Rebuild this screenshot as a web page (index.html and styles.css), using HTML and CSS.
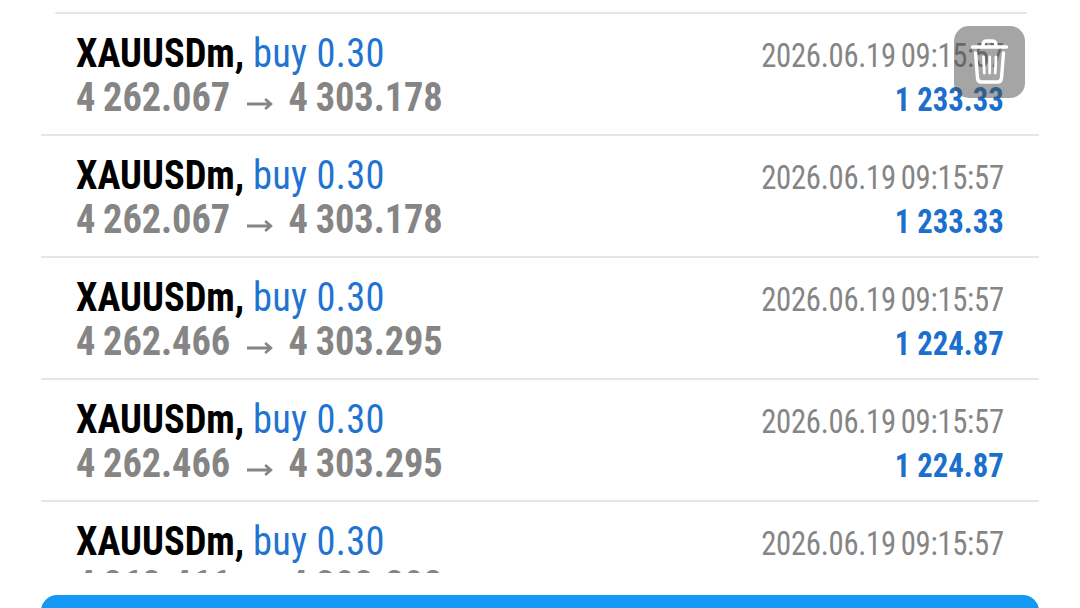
FILE: index.html
```html
<!DOCTYPE html>
<html lang="en">
<head>
  <meta charset="UTF-8">
  <meta name="viewport" content="width=device-width, initial-scale=1.0">
  <title>Trade History</title>
  <link rel="stylesheet" href="styles.css">
</head>
<body>
  <div class="history">
    <div class="top-line"></div>
    <div class="deal">
      <div class="deal-info">
        <div class="deal-title"><span class="symbol">XAUUSDm,</span> <span class="side">buy 0.30</span></div>
        <div class="prices"><span>4 262.067</span><svg class="arrow" viewBox="0 0 27 16"><path d="M0 8h25M19 3l6 5-6 5"/></svg><span>4 303.178</span></div>
      </div>
      <div class="deal-result">
        <div class="time">2026.06.19 09:15:57</div>
        <div class="profit">1 233.33</div>
      </div>
    </div>
    <div class="deal">
      <div class="deal-info">
        <div class="deal-title"><span class="symbol">XAUUSDm,</span> <span class="side">buy 0.30</span></div>
        <div class="prices"><span>4 262.067</span><svg class="arrow" viewBox="0 0 27 16"><path d="M0 8h25M19 3l6 5-6 5"/></svg><span>4 303.178</span></div>
      </div>
      <div class="deal-result">
        <div class="time">2026.06.19 09:15:57</div>
        <div class="profit">1 233.33</div>
      </div>
    </div>
    <div class="deal">
      <div class="deal-info">
        <div class="deal-title"><span class="symbol">XAUUSDm,</span> <span class="side">buy 0.30</span></div>
        <div class="prices"><span>4 262.466</span><svg class="arrow" viewBox="0 0 27 16"><path d="M0 8h25M19 3l6 5-6 5"/></svg><span>4 303.295</span></div>
      </div>
      <div class="deal-result">
        <div class="time">2026.06.19 09:15:57</div>
        <div class="profit">1 224.87</div>
      </div>
    </div>
    <div class="deal">
      <div class="deal-info">
        <div class="deal-title"><span class="symbol">XAUUSDm,</span> <span class="side">buy 0.30</span></div>
        <div class="prices"><span>4 262.466</span><svg class="arrow" viewBox="0 0 27 16"><path d="M0 8h25M19 3l6 5-6 5"/></svg><span>4 303.295</span></div>
      </div>
      <div class="deal-result">
        <div class="time">2026.06.19 09:15:57</div>
        <div class="profit">1 224.87</div>
      </div>
    </div>
    <div class="deal">
      <div class="deal-info">
        <div class="deal-title"><span class="symbol">XAUUSDm,</span> <span class="side">buy 0.30</span></div>
        <div class="prices"><span>4 262.466</span><svg class="arrow" viewBox="0 0 27 16"><path d="M0 8h25M19 3l6 5-6 5"/></svg><span>4 303.202</span></div>
      </div>
      <div class="deal-result">
        <div class="time">2026.06.19 09:15:57</div>
      </div>
    </div>
  </div>
  <div class="bottom-bar"></div>

  <button class="delete" aria-label="Delete">
    <svg viewBox="0 0 71 72">
      <path d="M18.5 21h34M29 20v-1q0-4 4-4h5q4 0 4 4v1M21.5 27l2 25q.3 4 4 4h16q3.700 0 4-4l2-25"/>
      <path class="ribs" d="M29.500 31l.8 16M35.700 31v16M42 31l-.8 16"/>
    </svg>
  </button>
</body>
</html>
```

FILE: styles.css
```css
* {
  box-sizing: border-box;
}

body {
  margin: 0;
  padding: 12px 41px 0;
  height: 608px;
  overflow: hidden;
  background: #fff;
  font-family: "Roboto Condensed", Roboto, sans-serif;
  font-stretch: 75%;
}

.history {
  height: 561px;
  overflow: hidden;
}

.top-line {
  height: 2px;
  margin: 0 12px 0 14px;
  background: #e6e6e6;
  border-radius: 2px;
}

.deal {
  display: flex;
  justify-content: space-between;
  height: 122px;
  padding: 18px 35px 0 35px;
  border-bottom: 2px solid #e6e6e6;
}

/* narrower digits and letters than the regular condensed cut */
.deal-title,
.prices {
  font-size: 40px;
  white-space: nowrap;
  transform: scaleX(0.96);
  transform-origin: left;
}

.deal-title {
  line-height: 44px;
}

.symbol {
  font-weight: 700;
  color: #000;
}

.side {
  letter-spacing: 0.3px;
  color: #1f74d2;
}

.prices {
  display: flex;
  align-items: center;
  line-height: 43px;
  font-weight: 700;
  letter-spacing: -0.1px;
  word-spacing: -1px;
  color: #858585;
}

.arrow {
  width: 27px;
  height: 16px;
  margin: 13px 16px 0 18px;
  fill: none;
  stroke: #858585;
  stroke-width: 2.8;
}

.deal-result {
  text-align: right;
  white-space: nowrap;
}

.time,
.profit {
  font-size: 33px;
  transform: scaleX(0.93);
  transform-origin: right;
}

.time {
  line-height: 48px;
  letter-spacing: -0.3px;
  word-spacing: -2px;
  color: #858585;
}

.profit {
  line-height: 40px;
  font-weight: 700;
  color: #1b6fcd;
}

.bottom-bar {
  height: 40px;
  margin-top: 22px;
  background: #1498f5;
  border-radius: 16px 16px 0 0;
}

.delete {
  position: absolute;
  top: 26px;
  left: 954px;
  width: 71px;
  height: 72px;
  padding: 0;
  border: none;
  border-radius: 15px;
  background: rgba(75, 75, 75, 0.5);
}

.delete svg {
  display: block;
  fill: none;
  stroke: #fff;
  stroke-width: 3.4;
  stroke-linecap: round;
  stroke-linejoin: round;
}

.delete .ribs {
  stroke-width: 2.8;
}
```
